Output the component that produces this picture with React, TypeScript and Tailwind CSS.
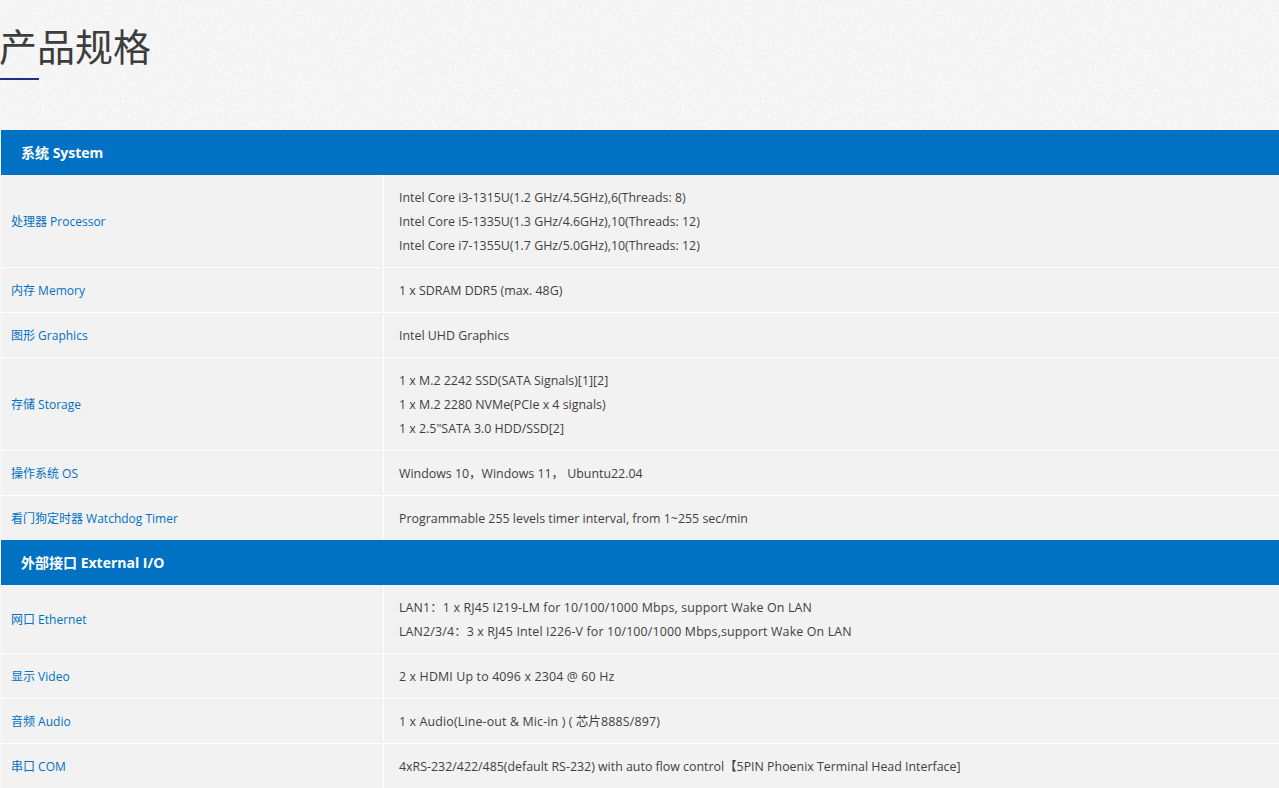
const sections = [
  {
    title: "系统 System",
    rows: [
      {
        name: "处理器 Processor",
        lines: [
          "Intel Core i3-1315U(1.2 GHz/4.5GHz),6(Threads: 8)",
          "Intel Core i5-1335U(1.3 GHz/4.6GHz),10(Threads: 12)",
          "Intel Core i7-1355U(1.7 GHz/5.0GHz),10(Threads: 12)",
        ],
      },
      { name: "内存 Memory", lines: ["1 x SDRAM DDR5 (max. 48G)"] },
      { name: "图形 Graphics", lines: ["Intel UHD Graphics"] },
      {
        name: "存储 Storage",
        lines: [
          "1 x M.2 2242 SSD(SATA Signals)[1][2]",
          "1 x M.2 2280 NVMe(PCIe x 4 signals)",
          '1 x 2.5"SATA 3.0 HDD/SSD[2]',
        ],
      },
      { name: "操作系统 OS", lines: ["Windows 10，Windows 11， Ubuntu22.04"] },
      { name: "看门狗定时器 Watchdog Timer", lines: ["Programmable 255 levels timer interval, from 1~255 sec/min"] },
    ],
  },
  {
    title: "外部接口 External I/O",
    rows: [
      {
        name: "网口 Ethernet",
        wide: true,
        lines: [
          "LAN1：1 x RJ45 I219-LM for 10/100/1000 Mbps, support Wake On LAN",
          "LAN2/3/4：3 x RJ45 Intel I226-V for 10/100/1000 Mbps,support Wake On LAN",
        ],
      },
      { name: "显示 Video", wide: true, lines: ["2 x HDMI Up to 4096 x 2304 @ 60 Hz"] },
      { name: "音频 Audio", wide: true, lines: ["1 x Audio(Line-out & Mic-in ) ( 芯片888S/897)"] },
      { name: "串口 COM", lines: ["4xRS-232/422/485(default RS-232) with auto flow control【5PIN Phoenix Terminal Head Interface]"] },
    ],
  },
];

const App = () => {
  return (
    <div className="relative h-[788px] overflow-hidden bg-[#f8f8f8] font-['Open_Sans','Noto_Sans_CJK_SC',sans-serif]">
      <svg className="absolute left-0 top-0 h-[130px] w-full" aria-hidden="true">
        <filter id="paper">
          <feTurbulence type="fractalNoise" baseFrequency="0.4" numOctaves="3" seed="4" />
          <feColorMatrix values="0 0 0 0 0.6 0 0 0 0 0.6 0 0 0 0 0.6 0.36 0 0 0 -0.12" />
        </filter>
        <rect width="100%" height="100%" filter="url(#paper)" />
      </svg>

      <div className="relative h-[130px]">
        <h2 className="-ml-px pt-5 font-['Noto_Sans_CJK_SC',sans-serif] text-[38px] font-normal leading-[50px] text-[#3d3d3d]">产品规格</h2>
        <div className="mt-2 h-0.5 w-[39px] bg-[#1c2f83]" />
      </div>

      <div className="relative ml-px">
        {sections.map((section) => (
          <div key={section.title}>
            <div className="h-[45px] bg-[#0071c3] pl-5 text-sm font-bold leading-[45px] text-white">{section.title}</div>
            {section.rows.map((row, index) => (
              <div
                key={row.name}
                className={`flex bg-[#f2f2f2] leading-6 ${index < section.rows.length - 1 || section.title.startsWith("外部") ? "border-b border-white" : ""}`}
              >
                <div className="flex w-[383px] items-center border-r border-white pl-2.5 pt-0.5 text-xs text-[#0071c3]">{row.name}</div>
                <div className={`pb-[9px] pl-[15px] pt-[11px] text-[12.4px] text-[#3f3f3f] ${row.wide ? "tracking-[0.15px]" : ""}`}>
                  {row.lines.map((line) => (
                    <p key={line}>{line}</p>
                  ))}
                </div>
              </div>
            ))}
          </div>
        ))}
      </div>
    </div>
  );
};

export default App;
